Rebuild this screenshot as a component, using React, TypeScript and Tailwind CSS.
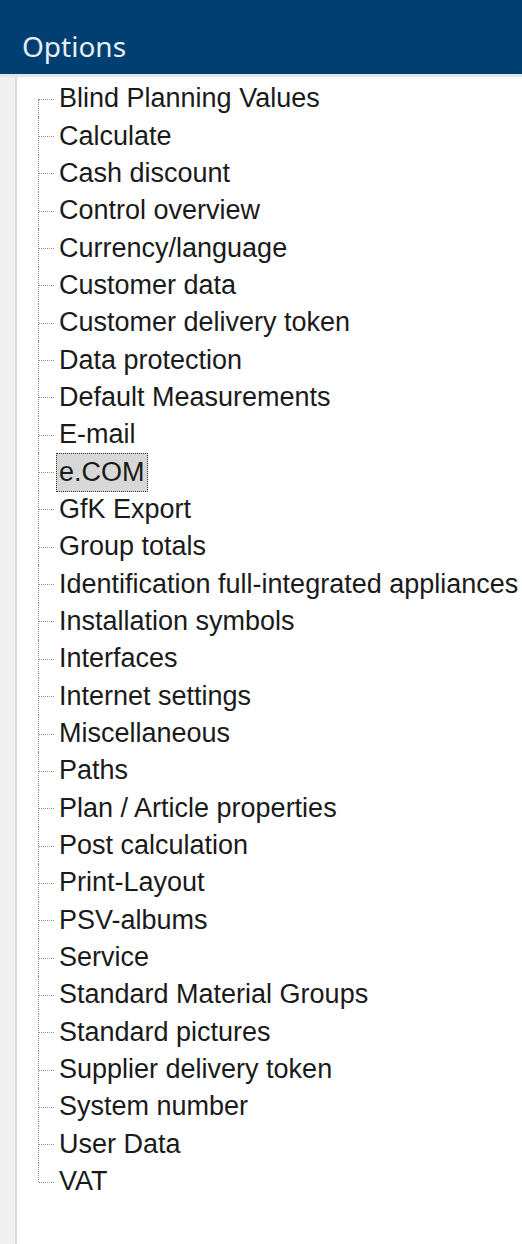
import React from "react";

const items = [
  "Blind Planning Values",
  "Calculate",
  "Cash discount",
  "Control overview",
  "Currency/language",
  "Customer data",
  "Customer delivery token",
  "Data protection",
  "Default Measurements",
  "E-mail",
  "e.COM",
  "GfK Export",
  "Group totals",
  "Identification full-integrated appliances",
  "Installation symbols",
  "Interfaces",
  "Internet settings",
  "Miscellaneous",
  "Paths",
  "Plan / Article properties",
  "Post calculation",
  "Print-Layout",
  "PSV-albums",
  "Service",
  "Standard Material Groups",
  "Standard pictures",
  "Supplier delivery token",
  "System number",
  "User Data",
  "VAT",
];

const selected = "e.COM";

function TreeRow({ label, first, last }: { label: string; first: boolean; last: boolean }) {
  return (
    <div className="flex h-[37.35px] items-center">
      {/* connector */}
      <div className="relative w-[18px] self-stretch">
        <div
          className={
            "absolute left-0 border-l border-dotted border-[#8a8a8a] " +
            (first ? "top-1/2 bottom-0" : last ? "top-0 bottom-1/2" : "top-0 bottom-0")
          }
        />
        <div className="absolute left-[1px] top-1/2 w-[15px] border-t border-dotted border-[#8a8a8a]" />
      </div>
      <span
        className={
          "whitespace-nowrap px-[2px] leading-[37px] " +
          (label === selected ? "border border-dotted border-[#333] bg-[#d7d7d7]" : "border border-transparent")
        }
      >
        {label}
      </span>
    </div>
  );
}

export default function App() {
  return (
    <div className="flex h-[1244px] w-[522px] flex-col overflow-hidden bg-[#f0f0f0]">
      <div className="h-[74px] bg-[#003f72] pl-[22px] pt-[27px]">
        <div className="text-[28px] leading-[38px] text-[#e8eef5]" style={{ fontFamily: '"Noto Sans", sans-serif' }}>
          Options
        </div>
      </div>
      <div className="h-[3px] bg-[#e2e5ea]" />
      <div className="flex flex-1">
        <div className="w-[17px] border-r-[2px] border-[#dadada]" />
        <div
          className="flex-1 bg-white pl-[21px] pt-[3px] text-[27px] text-[#1a1a1a]"
          style={{ fontFamily: '"Liberation Sans", Arial, sans-serif' }}
        >
          {items.map((label, i) => (
            <TreeRow key={label} label={label} first={i === 0} last={i === items.length - 1} />
          ))}
        </div>
      </div>
    </div>
  );
}
